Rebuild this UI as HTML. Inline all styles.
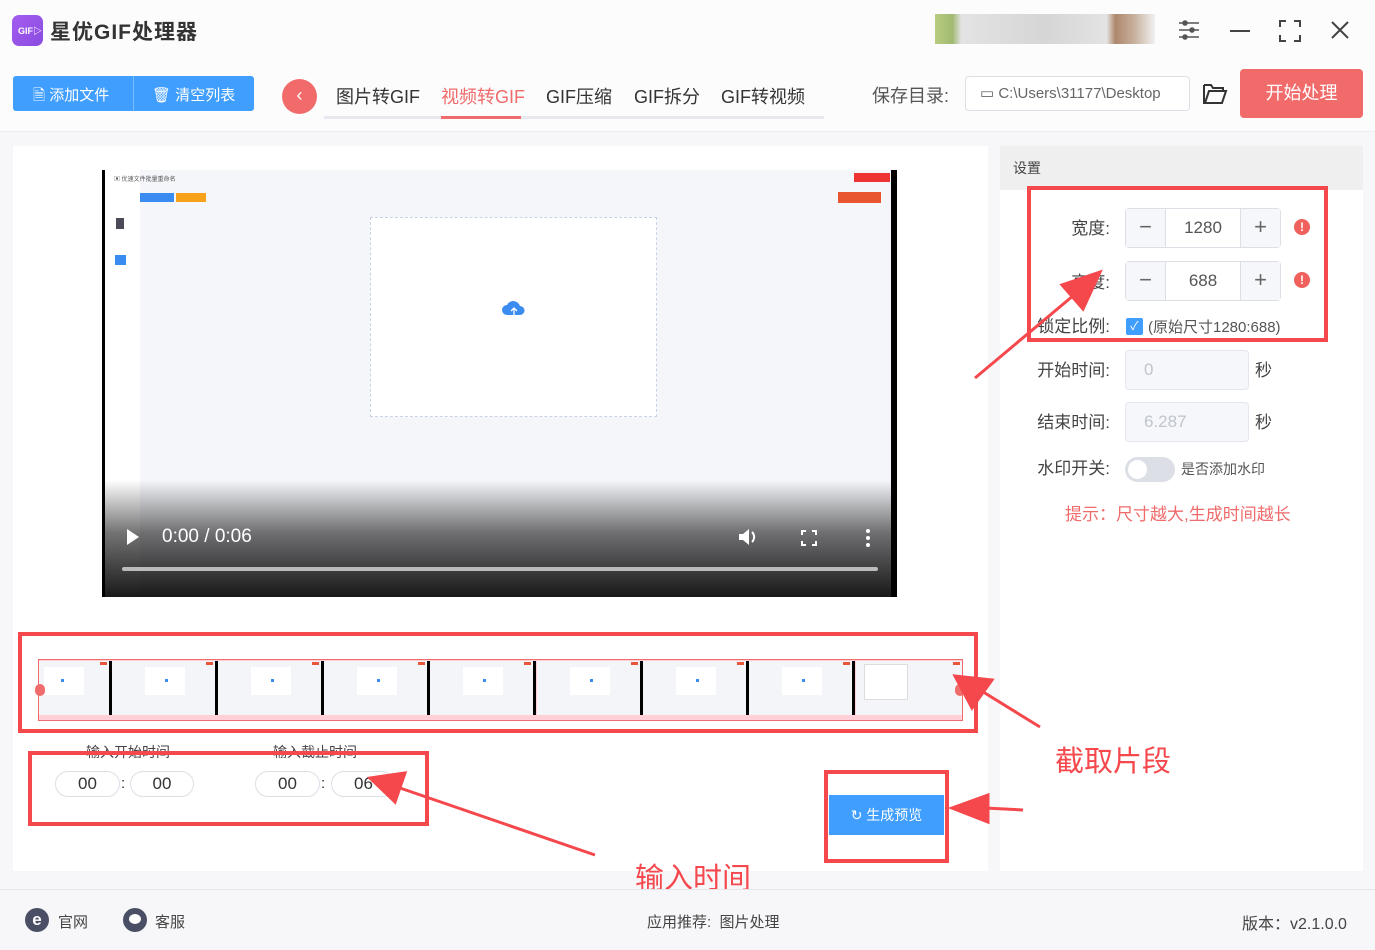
<!DOCTYPE html>
<html><head><meta charset="utf-8"><style>
*{margin:0;padding:0;box-sizing:border-box}
body{width:1375px;height:950px;background:#f7f7f9;font-family:"Liberation Sans","Noto Sans CJK SC",sans-serif;position:relative;overflow:hidden;color:#333}
.a{position:absolute}
.frame{position:absolute;top:661px;width:106px;height:54px;background:#f4f5f9;border-right:3px solid #000}
.frame i{position:absolute;left:33px;top:6px;width:40px;height:28px;background:#fff}
.frame b{position:absolute;left:53px;top:18px;width:3px;height:3px;background:#3b8cf0}
.frame u{position:absolute;right:2px;top:1px;width:7px;height:3px;background:#e8553a}
.tin{position:absolute;width:64px;height:26px;border:1px solid #dcdfe6;border-radius:13px;background:#fff;font-size:17px;text-align:center;line-height:24px;color:#333}
.lbl{position:absolute;font-size:17px;color:#444;text-align:right;width:80px}
.num{position:absolute;width:156px;height:40px;border:1px solid #dcdfe6;border-radius:4px;background:#fff}
.num .m,.num .p{position:absolute;top:0;width:40px;height:38px;background:#f5f7fa;font-size:22px;color:#666;text-align:center;line-height:36px}
.num .m{left:0;border-right:1px solid #dcdfe6}.num .p{right:0;border-left:1px solid #dcdfe6}
.num .v{position:absolute;left:40px;right:40px;top:0;line-height:38px;text-align:center;font-size:17px;color:#555}
.warn{position:absolute;width:16px;height:16px;border-radius:50%;background:#f0605c;color:#fff;font-size:12px;font-weight:bold;text-align:center;line-height:16px}
.dis{position:absolute;width:124px;height:40px;border:1px solid #e4e7ed;border-radius:4px;background:#f5f7fa;color:#c0c4cc;font-size:17px;line-height:38px;padding-left:18px}
</style></head><body>
<!-- header -->
<div class="a" style="left:0;top:0;width:1375px;height:132px;background:#fcfcfd;border-bottom:1px solid #eceef2"></div>
<div class="a" style="left:12px;top:15px;width:31px;height:31px;border-radius:7px;background:linear-gradient(135deg,#a35ef0,#8b4be0)"></div>
<div class="a" style="left:18px;top:24px;font-size:9px;color:#fff;font-weight:bold">GIF▷</div>
<div class="a" style="left:50px;top:16px;font-size:21px;font-weight:bold;color:#333;letter-spacing:1px">星优GIF处理器</div>
<div class="a" style="left:935px;top:14px;width:220px;height:30px;background:linear-gradient(90deg,#a8c060 0,#8aa850 8%,#ddd 12%,#ccc 50%,#ddd 78%,#9a6a48 82%,#b89a80 90%,#eee 100%);opacity:.8"></div>
<svg class="a" style="left:1177px;top:18px" width="24" height="24" fill="none" stroke="#555" stroke-width="1.5"><path d="M2 5h20M2 12h20M2 19h20"/><circle cx="8" cy="5" r="2" fill="#555"/><circle cx="15" cy="12" r="2" fill="#555"/><circle cx="8" cy="19" r="2" fill="#555"/></svg>
<div class="a" style="left:1230px;top:30px;width:20px;height:2px;background:#444"></div>
<svg class="a" style="left:1279px;top:20px" width="22" height="22" fill="none" stroke="#444" stroke-width="2"><path d="M1 7V1h6M15 1h6v6M21 15v6h-6M7 21H1v-6"/></svg>
<svg class="a" style="left:1331px;top:21px" width="18" height="18" stroke="#444" stroke-width="2"><path d="M1 1l16 16M17 1L1 17"/></svg>
<div class="a" style="left:13px;top:76px;width:241px;height:35px;background:#409efe;border-radius:3px"></div>
<div class="a" style="left:133px;top:76px;width:1px;height:35px;background:#7bbcff"></div>
<div class="a" style="left:33px;top:84px;font-size:15px;color:#fff">🗎 添加文件</div>
<div class="a" style="left:152px;top:84px;font-size:15px;color:#fff">🗑 清空列表</div>
<div class="a" style="left:282px;top:79px;width:35px;height:35px;border-radius:50%;background:#f26b6b;color:#fff;text-align:center;line-height:33px;font-size:18px">‹</div>
<div class="a" style="left:324px;top:116px;width:500px;height:3px;background:#e8e8f0"></div>
<div class="a" style="left:441px;top:116px;width:80px;height:3px;background:#f06b6b"></div>
<div class="a" style="left:336px;top:83px;font-size:18px;color:#333">图片转GIF</div>
<div class="a" style="left:441px;top:83px;font-size:18px;color:#f06b6b">视频转GIF</div>
<div class="a" style="left:546px;top:83px;font-size:18px;color:#333">GIF压缩</div>
<div class="a" style="left:634px;top:83px;font-size:18px;color:#333">GIF拆分</div>
<div class="a" style="left:721px;top:83px;font-size:18px;color:#333">GIF转视频</div>
<div class="a" style="left:872px;top:82px;font-size:18px;color:#555">保存目录:</div>
<div class="a" style="left:965px;top:76px;width:225px;height:35px;border:1px solid #dcdfe6;border-radius:4px;background:#fff;font-size:15px;color:#666;line-height:33px;padding-left:14px">▭ C:\Users\31177\Desktop</div>
<svg class="a" style="left:1202px;top:82px" width="26" height="24" fill="none" stroke="#333" stroke-width="2"><path d="M2 3h7l2 3h10v3M2 3v18h18l4-12H7L3 21"/></svg>
<div class="a" style="left:1240px;top:69px;width:123px;height:49px;border-radius:4px;background:#f26b6b;color:#fff;font-size:18px;text-align:center;line-height:49px">开始处理</div>
<!-- left panel -->
<div class="a" style="left:13px;top:146px;width:975px;height:725px;background:#fff"></div>
<div class="a" style="left:102px;top:170px;width:795px;height:427px;background:#000"></div>
<div class="a" style="left:105px;top:170px;width:786px;height:427px;background:#f5f6fa"></div>
<div class="a" style="left:105px;top:170px;width:35px;height:427px;background:#fff"></div>
<div class="a" style="left:114px;top:174px;font-size:6px;color:#555">▣ 优速文件批量重命名</div>
<div class="a" style="left:140px;top:193px;width:34px;height:9px;background:#3b8cf0"></div>
<div class="a" style="left:176px;top:193px;width:30px;height:9px;background:#f8a21c"></div>
<div class="a" style="left:838px;top:192px;width:43px;height:11px;background:#e8552e"></div>
<div class="a" style="left:854px;top:173px;width:36px;height:9px;background:#e33"></div>
<div class="a" style="left:116px;top:218px;width:8px;height:11px;background:#4a4a58"></div>
<div class="a" style="left:115px;top:255px;width:11px;height:10px;background:#3b8cf0"></div>
<div class="a" style="left:370px;top:217px;width:287px;height:200px;background:#fff;border:1px dashed #c8d4e6"></div>
<svg class="a" style="left:502px;top:300px" width="24" height="20"><path d="M5 15a5 5 0 010-10 7 7 0 0113 1 4.5 4.5 0 010 9z" fill="#3b8cf0"/><path d="M12 18V8M9 11l3-3 3 3" stroke="#fff" stroke-width="1.3" fill="none"/></svg>
<div class="a" style="left:102px;top:480px;width:795px;height:117px;background:linear-gradient(rgba(0,0,0,0),rgba(0,0,0,.55) 45%,rgba(0,0,0,.9))"></div>
<svg class="a" style="left:126px;top:528px" width="14" height="18"><path d="M1 1l12 8-12 8z" fill="#fff"/></svg>
<div class="a" style="left:162px;top:526px;font-size:19px;color:#fff">0:00 / 0:06</div>
<svg class="a" style="left:738px;top:528px" width="22" height="18"><path d="M1 6h4l6-5v16l-6-5H1z" fill="#fff"/><path d="M14 4a7 7 0 010 10" stroke="#fff" stroke-width="2" fill="none"/></svg>
<svg class="a" style="left:801px;top:530px" width="16" height="16" fill="none" stroke="#fff" stroke-width="2"><path d="M1 5V1h4M11 1h4v4M15 11v4h-4M5 15H1v-4"/></svg>
<div class="a" style="left:866px;top:529px;width:4px;height:4px;border-radius:2px;background:#fff;box-shadow:0 7px 0 #fff,0 14px 0 #fff"></div>
<div class="a" style="left:122px;top:567px;width:756px;height:4px;border-radius:2px;background:#bbb"></div>
<!-- filmstrip -->
<div class="a" style="left:38px;top:659px;width:925px;height:62px;border:1px solid #f06b6b;background:#ffd0d8"></div>
<div class="frame" style="left:39px;width:73px"><i style="left:5px"></i><b style="left:22px"></b><u></u></div>
<div class="frame" style="left:112px"><i></i><b></b><u></u></div>
<div class="frame" style="left:218px"><i></i><b></b><u></u></div>
<div class="frame" style="left:324px"><i></i><b></b><u></u></div>
<div class="frame" style="left:430px"><i></i><b></b><u></u></div>
<div class="frame" style="left:537px"><i></i><b></b><u></u></div>
<div class="frame" style="left:643px"><i></i><b></b><u></u></div>
<div class="frame" style="left:749px"><i></i><b></b><u></u></div>
<div class="frame" style="left:856px;width:106px;border:none"><i style="left:8px;top:3px;width:44px;height:36px;border:1px solid #ddd"></i><u></u></div>
<div class="a" style="left:35px;top:684px;width:10px;height:12px;border-radius:6px;background:#f06b6b"></div>
<div class="a" style="left:955px;top:684px;width:10px;height:12px;border-radius:6px;background:#f06b6b"></div>
<div class="a" style="left:86px;top:742px;font-size:14px;color:#444">输入开始时间</div>
<div class="a" style="left:273px;top:742px;font-size:14px;color:#444">输入截止时间</div>
<div class="tin" style="left:55px;top:771px;width:65px">00</div><div class="a" style="left:121px;top:775px;font-size:15px">:</div>
<div class="tin" style="left:130px;top:771px">00</div>
<div class="tin" style="left:255px;top:771px;width:65px">00</div><div class="a" style="left:321px;top:775px;font-size:15px">:</div>
<div class="tin" style="left:331px;top:771px;width:64px;text-align:left;padding-left:22px">06</div>
<div class="a" style="left:829px;top:795px;width:115px;height:40px;background:#409efe;color:#fff;font-size:14px;line-height:40px;text-align:center">↻ 生成预览</div>
<!-- right panel -->
<div class="a" style="left:1000px;top:146px;width:363px;height:725px;background:#fff"></div>
<div class="a" style="left:1000px;top:146px;width:363px;height:44px;background:#efeff0"></div>
<div class="a" style="left:1013px;top:158px;font-size:14px;color:#444">设置</div>
<div class="lbl" style="left:1030px;top:214px">宽度:</div>
<div class="num" style="left:1125px;top:208px"><div class="m">−</div><div class="v">1280</div><div class="p">+</div></div>
<div class="warn" style="left:1294px;top:219px">!</div>
<div class="lbl" style="left:1030px;top:268px">高度:</div>
<div class="num" style="left:1125px;top:261px"><div class="m">−</div><div class="v">688</div><div class="p">+</div></div>
<div class="warn" style="left:1294px;top:272px">!</div>
<div class="lbl" style="left:1030px;top:312px">锁定比例:</div>
<div class="a" style="left:1126px;top:318px;width:17px;height:17px;border-radius:2px;background:#409efe;color:#fff;font-size:12px;text-align:center;line-height:17px">✓</div>
<div class="a" style="left:1148px;top:316px;font-size:15px;color:#555">(原始尺寸1280:688)</div>
<div class="lbl" style="left:1030px;top:356px">开始时间:</div>
<div class="dis" style="left:1125px;top:350px">0</div>
<div class="a" style="left:1255px;top:356px;font-size:17px;color:#444">秒</div>
<div class="lbl" style="left:1030px;top:408px">结束时间:</div>
<div class="dis" style="left:1125px;top:402px">6.287</div>
<div class="a" style="left:1255px;top:408px;font-size:17px;color:#444">秒</div>
<div class="lbl" style="left:1030px;top:454px">水印开关:</div>
<div class="a" style="left:1125px;top:457px;width:50px;height:25px;border-radius:13px;background:#dcdfe6"></div>
<div class="a" style="left:1128px;top:460px;width:19px;height:19px;border-radius:50%;background:#fff"></div>
<div class="a" style="left:1181px;top:459px;font-size:14px;color:#555">是否添加水印</div>
<div class="a" style="left:1065px;top:500px;font-size:17px;color:#f06b6b">提示：尺寸越大,生成时间越长</div>
<!-- annotations on top -->
<div class="a" style="left:18px;top:632px;width:960px;height:101px;border:4px solid #f5484d"></div>
<div class="a" style="left:28px;top:751px;width:401px;height:75px;border:4px solid #f5484d"></div>
<div class="a" style="left:824px;top:770px;width:125px;height:93px;border:4px solid #f5484d"></div>
<div class="a" style="left:1027px;top:186px;width:301px;height:156px;border:4px solid #f5484d"></div>
<div class="a" style="left:1055px;top:738px;font-size:29px;color:#f5484d">截取片段</div>
<div class="a" style="left:635px;top:855px;font-size:29px;color:#f5484d">输入时间</div>
<svg class="a" style="left:0;top:0" width="1375" height="950">
<g fill="#f5484d" stroke="#f5484d" stroke-width="3">
<line x1="975" y1="378" x2="1080" y2="290"/><polygon points="1100,272 1062,285 1083,309"/>
<line x1="1040" y1="727" x2="980" y2="690"/><polygon points="955,676 972,708 992,680"/>
<line x1="595" y1="855" x2="400" y2="788"/><polygon points="370,778 395,802 405,773"/>
<line x1="1023" y1="810" x2="985" y2="808"/><polygon points="952,808 988,795 988,822"/>
</g></svg>
<!-- footer -->
<div class="a" style="left:0;top:889px;width:1375px;height:61px;background:#f7f7f9;border-top:1px solid #e6e6ea"></div>
<div class="a" style="left:25px;top:908px;width:24px;height:24px;border-radius:50%;background:#4a4f66;color:#fff;font-size:17px;font-weight:bold;text-align:center;line-height:23px">e</div>
<div class="a" style="left:58px;top:911px;font-size:15px;color:#444">官网</div>
<div class="a" style="left:123px;top:908px;width:24px;height:24px;border-radius:50%;background:#4a4f66"></div>
<div class="a" style="left:129px;top:914px;width:12px;height:10px;border-radius:50%;background:#fff"></div>
<div class="a" style="left:155px;top:911px;font-size:15px;color:#444">客服</div>
<div class="a" style="left:647px;top:911px;font-size:15px;color:#444">应用推荐:&nbsp;&nbsp;图片处理</div>
<div class="a" style="left:1242px;top:910px;font-size:16px;color:#444">版本：v2.1.0.0</div>
</body></html>
